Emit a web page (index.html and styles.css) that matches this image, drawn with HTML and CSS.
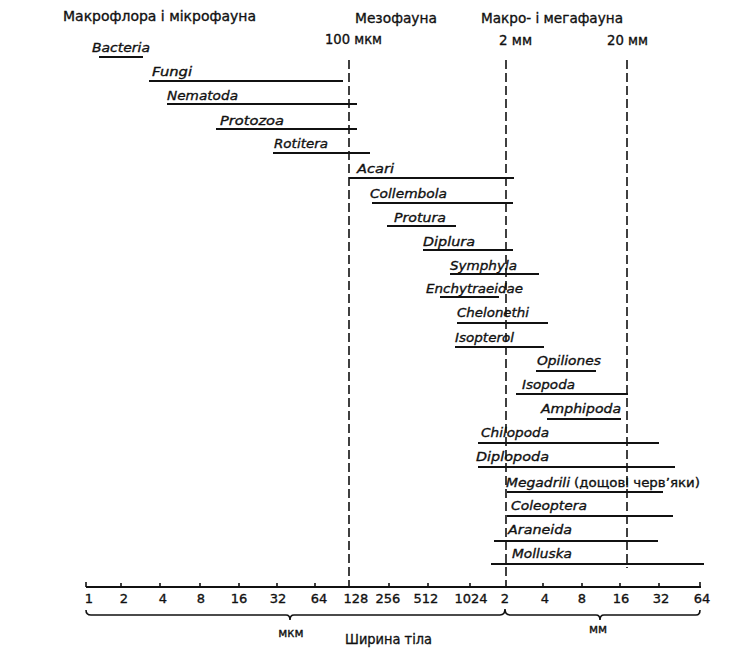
FILE: index.html
```html
<!DOCTYPE html>
<html lang="uk">
<head>
<meta charset="utf-8">
<title>Ширина тіла</title>
<link rel="stylesheet" href="styles.css">
</head>
<body>
<main class="figure">
<svg class="chart" width="753" height="648" viewBox="0 0 753 648" xmlns="http://www.w3.org/2000/svg">
  <!-- headings -->
  <text class="head" x="63" y="21" textLength="193" lengthAdjust="spacingAndGlyphs">Макрофлора і мікрофауна</text>
  <text class="head" x="355" y="23" textLength="82" lengthAdjust="spacingAndGlyphs">Мезофауна</text>
  <text class="head" x="481" y="23" textLength="142" lengthAdjust="spacingAndGlyphs">Макро- і мегафауна</text>
  <text class="head" x="325" y="44" textLength="57" lengthAdjust="spacingAndGlyphs">100 мкм</text>
  <text class="head" x="499" y="45" textLength="33" lengthAdjust="spacingAndGlyphs">2 мм</text>
  <text class="head" x="607" y="45" textLength="41" lengthAdjust="spacingAndGlyphs">20 мм</text>

  <!-- dashed boundaries -->
  <line class="dash" x1="349" y1="60" x2="349" y2="587"/>
  <line class="dash" x1="506" y1="60" x2="506" y2="587"/>
  <line class="dash" x1="627" y1="60" x2="627" y2="568"/>

  <!-- groups -->
  <g class="rows">
    <text class="tax" x="92" y="52" textLength="58" lengthAdjust="spacingAndGlyphs">Bacteria</text>
    <line class="bar" x1="99" y1="57" x2="143" y2="57"/>

    <text class="tax" x="152" y="76" textLength="40" lengthAdjust="spacingAndGlyphs">Fungi</text>
    <line class="bar" x1="149" y1="81" x2="343" y2="81"/>

    <text class="tax" x="167" y="100" textLength="71" lengthAdjust="spacingAndGlyphs">Nematoda</text>
    <line class="bar" x1="167" y1="104" x2="357" y2="104"/>

    <text class="tax" x="220" y="125" textLength="64" lengthAdjust="spacingAndGlyphs">Protozoa</text>
    <line class="bar" x1="216" y1="129" x2="357" y2="129"/>

    <text class="tax" x="274" y="148" textLength="54" lengthAdjust="spacingAndGlyphs">Rotitera</text>
    <line class="bar" x1="273" y1="153" x2="370" y2="153"/>

    <text class="tax" x="357" y="173" textLength="37" lengthAdjust="spacingAndGlyphs">Acari</text>
    <line class="bar" x1="349" y1="178" x2="514" y2="178"/>

    <text class="tax" x="370" y="198" textLength="77" lengthAdjust="spacingAndGlyphs">Collembola</text>
    <line class="bar" x1="372" y1="203" x2="513" y2="203"/>

    <text class="tax" x="394" y="222" textLength="52" lengthAdjust="spacingAndGlyphs">Protura</text>
    <line class="bar" x1="387" y1="226" x2="456" y2="226"/>

    <text class="tax" x="423" y="246" textLength="52" lengthAdjust="spacingAndGlyphs">Diplura</text>
    <line class="bar" x1="423" y1="250" x2="513" y2="250"/>

    <text class="tax" x="450" y="270" textLength="67" lengthAdjust="spacingAndGlyphs">Symphyla</text>
    <line class="bar" x1="450" y1="274" x2="539" y2="274"/>

    <text class="tax" x="426" y="293" textLength="97" lengthAdjust="spacingAndGlyphs">Enchytraeidae</text>
    <line class="bar" x1="440" y1="297" x2="499" y2="297"/>

    <text class="tax" x="457" y="317" textLength="72" lengthAdjust="spacingAndGlyphs">Chelonethi</text>
    <line class="bar" x1="457" y1="323" x2="548" y2="323"/>

    <text class="tax" x="455" y="342" textLength="59" lengthAdjust="spacingAndGlyphs">Isopterol</text>
    <line class="bar" x1="455" y1="347" x2="544" y2="347"/>

    <text class="tax" x="537" y="365" textLength="64" lengthAdjust="spacingAndGlyphs">Opiliones</text>
    <line class="bar" x1="536" y1="371" x2="596" y2="371"/>

    <text class="tax" x="522" y="389" textLength="53" lengthAdjust="spacingAndGlyphs">Isopoda</text>
    <line class="bar" x1="516" y1="394" x2="628" y2="394"/>

    <text class="tax" x="541" y="413" textLength="80" lengthAdjust="spacingAndGlyphs">Amphipoda</text>
    <line class="bar" x1="547" y1="419" x2="621" y2="419"/>

    <text class="tax" x="481" y="437" textLength="68" lengthAdjust="spacingAndGlyphs">Chilopoda</text>
    <line class="bar" x1="478" y1="443" x2="659" y2="443"/>

    <text class="tax" x="476" y="461" textLength="73" lengthAdjust="spacingAndGlyphs">Diplopoda</text>
    <line class="bar" x1="478" y1="467" x2="675" y2="467"/>

    <text class="tax" x="506" y="487" textLength="64" lengthAdjust="spacingAndGlyphs">Megadrili</text>
    <text class="note" x="574" y="487" textLength="126" lengthAdjust="spacingAndGlyphs">(дощові черв’яки)</text>
    <line class="bar" x1="507" y1="492" x2="663" y2="492"/>

    <text class="tax" x="511" y="510" textLength="76" lengthAdjust="spacingAndGlyphs">Coleoptera</text>
    <line class="bar" x1="507" y1="516" x2="673" y2="516"/>

    <text class="tax" x="508" y="534" textLength="64" lengthAdjust="spacingAndGlyphs">Araneida</text>
    <line class="bar" x1="494" y1="541" x2="658" y2="541"/>

    <text class="tax" x="512" y="558" textLength="60" lengthAdjust="spacingAndGlyphs">Molluska</text>
    <line class="bar" x1="491" y1="564" x2="704" y2="564"/>
  </g>

  <!-- axis -->
  <line class="axis" x1="86" y1="587" x2="701" y2="587"/>
  <g class="ticks">
    <line x1="86" y1="582" x2="86" y2="587"/>
    <line x1="121" y1="583" x2="121" y2="587"/>
    <line x1="160" y1="583" x2="160" y2="587"/>
    <line x1="200" y1="583" x2="200" y2="587"/>
    <line x1="239" y1="583" x2="239" y2="587"/>
    <line x1="277" y1="583" x2="277" y2="587"/>
    <line x1="315" y1="583" x2="315" y2="587"/>
    <line x1="389" y1="583" x2="389" y2="587"/>
    <line x1="428" y1="583" x2="428" y2="587"/>
    <line x1="470" y1="583" x2="470" y2="587"/>
    <line x1="543" y1="583" x2="543" y2="587"/>
    <line x1="582" y1="583" x2="582" y2="587"/>
    <line x1="620" y1="583" x2="620" y2="587"/>
    <line x1="659" y1="583" x2="659" y2="587"/>
    <line x1="700" y1="582" x2="700" y2="587"/>
  </g>
  <g class="nums">
    <text x="89" y="603">1</text>
    <text x="124" y="603">2</text>
    <text x="163" y="603">4</text>
    <text x="201" y="603">8</text>
    <text x="239" y="603">16</text>
    <text x="278" y="603">32</text>
    <text x="319" y="603">64</text>
    <text x="356" y="603">128</text>
    <text x="388" y="603">256</text>
    <text x="426" y="603">512</text>
    <text x="471" y="603">1024</text>
    <text x="505" y="603">2</text>
    <text x="545" y="603">4</text>
    <text x="582" y="603">8</text>
    <text x="621" y="603">16</text>
    <text x="661" y="603">32</text>
    <text x="702" y="603">64</text>
  </g>

  <!-- braces -->
  <path class="brace" d="M86,610 Q86,615 91,615 L286,615 Q290,615 290,620 Q290,615 294,615 L500,615 Q505,615 505,609 Q505,615 510,615 L596,615 Q600,615 600,620 Q600,615 604,615 L696,615 Q700,615 700,610"/>
  <text class="unit" x="291" y="637">мкм</text>
  <text class="unit" x="598" y="633">мм</text>
  <text class="head" x="345" y="644" textLength="87" lengthAdjust="spacingAndGlyphs">Ширина тіла</text>
</svg>
</main>
</body>
</html>
```
FILE: styles.css
```css
html, body {
  margin: 0;
  padding: 0;
  background: #ffffff;
}

.figure {
  width: 753px;
  height: 648px;
  overflow: hidden;
}

.chart {
  display: block;
  font-family: "DejaVu Sans", "Liberation Sans", sans-serif;
  fill: #111111;
}

.chart text {
  stroke: #111111;
  stroke-width: 0.35;
}

.head {
  font-size: 14px;
  fill: #111111;
}

.tax {
  font-size: 13px;
  font-style: italic;
  fill: #111111;
}

.note {
  font-size: 13px;
  fill: #111111;
}

.bar {
  stroke: #111111;
  stroke-width: 2;
}

.dash {
  stroke: #111111;
  stroke-width: 1.6;
  stroke-dasharray: 9 4;
}

.axis {
  stroke: #111111;
  stroke-width: 2;
}

.ticks line {
  stroke: #111111;
  stroke-width: 1.6;
}

.nums text {
  font-size: 13px;
  text-anchor: middle;
  fill: #111111;
}

.brace {
  fill: none;
  stroke: #111111;
  stroke-width: 1.6;
}

.unit {
  font-size: 12px;
  text-anchor: middle;
  fill: #111111;
}
```
